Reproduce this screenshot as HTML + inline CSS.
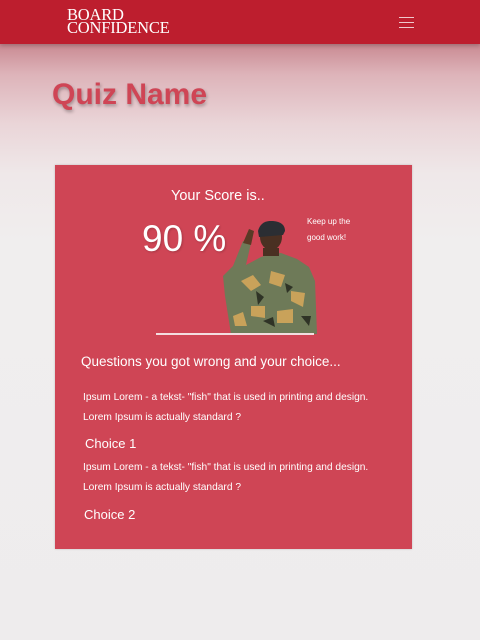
<!DOCTYPE html>
<html><head><style>
*{margin:0;padding:0;box-sizing:border-box}
body{width:480px;height:640px;overflow:hidden;background:#efeced;font-family:"Liberation Sans",sans-serif;position:relative}
.bg{position:absolute;left:0;top:44px;width:480px;height:596px;background:linear-gradient(#c98a92 0px,#ddb3b9 30px,#ead5d8 80px,#efe8e9 130px,#f0eeee 200px,#eeeced 640px)}
.hdr{position:absolute;left:0;top:0;width:480px;height:44px;background:#bd1e2e;box-shadow:0 2px 4px rgba(0,0,0,.2)}
.logo{position:absolute;left:67px;top:8px;color:#fff;font-family:"Liberation Serif",serif;font-size:16.5px;line-height:13px;letter-spacing:-.2px}
.burg{position:absolute;left:399px;top:17px;width:15px}
.burg div{height:1px;background:#f0c8cc;margin-bottom:4px}
h1{position:absolute;left:52px;top:78px;font-size:30px;font-weight:bold;color:#cf4555;text-shadow:1px 2px 3px rgba(0,0,0,.3)}
.card{position:absolute;left:55px;top:165px;width:357px;height:384px;background:#cf4555;color:#fff;box-shadow:0 0 2px rgba(0,0,0,.2)}
.t{position:absolute;white-space:nowrap}
</style></head><body>
<div class="bg"></div>
<div class="hdr"><div class="logo">BOARD<br>CONFIDENCE</div>
<div class="burg"><div></div><div></div><div></div></div></div>
<h1>Quiz Name</h1>
<div class="card">
<div class="t" style="left:116px;top:23px;font-size:14.5px">Your Score is..</div>
<div class="t" style="left:87px;top:53px;font-size:37px;text-shadow:1px 1px 2px rgba(0,0,0,.2)">90 %</div>
<div class="t" style="left:252px;top:49px;font-size:8px;line-height:16px">Keep up the<br>good work!</div>
<svg class="t" style="left:166px;top:56px" width="98" height="114" viewBox="0 0 98 114">
<path d="M12 45 L22 20 L30 22 L25 44 L40 36 L50 33 L60 32 L76 38 L88 46 L94 60 L96 113 L10 113 L4 75 L2 55 Z" fill="#6e7a58"/>
<path d="M20 60 l12 -6 l8 10 l-10 6z M50 50 l14 4 l-4 12 l-12 -4z M70 70 l14 2 l-2 14 l-12 -6z M30 85 l14 0 l0 12 l-14 -2z M56 90 l16 -2 l0 14 l-16 0z M12 95 l10 -4 l4 14 l-12 0z" fill="#c9a25a"/>
<path d="M35 70 l8 6 l-6 8z M64 62 l8 4 l-6 6z M80 95 l10 0 l-2 10z M42 100 l10 -4 l2 10z" fill="#2f3326"/>
<path d="M22 22 l6 -14 l5 2 l-3 14z" fill="#5a3a26"/>
<ellipse cx="50" cy="16" rx="11" ry="13" fill="#4a3022"/>
<path d="M37 10 Q40 -1 52 0 Q64 1 64 10 L62 14 L38 16 Z" fill="#2b2e33"/>
<rect x="42" y="27" width="16" height="8" fill="#4a3022"/>
</svg>
<div class="t" style="left:101px;top:168px;width:158px;height:2px;background:#f3dde0"></div>
<div class="t" style="left:26px;top:189px;font-size:13.5px">Questions you got wrong and your choice...</div>
<div class="t" style="left:28px;top:223px;font-size:10.2px;line-height:20px">Ipsum Lorem - a tekst- "fish" that is used in printing and design.<br>Lorem Ipsum is actually standard ?</div>
<div class="t" style="left:30px;top:271px;font-size:13px">Choice 1</div>
<div class="t" style="left:28px;top:293px;font-size:10.2px;line-height:20px">Ipsum Lorem - a tekst- "fish" that is used in printing and design.<br>Lorem Ipsum is actually standard ?</div>
<div class="t" style="left:29px;top:342px;font-size:13px">Choice 2</div>
</div>
</body></html>
